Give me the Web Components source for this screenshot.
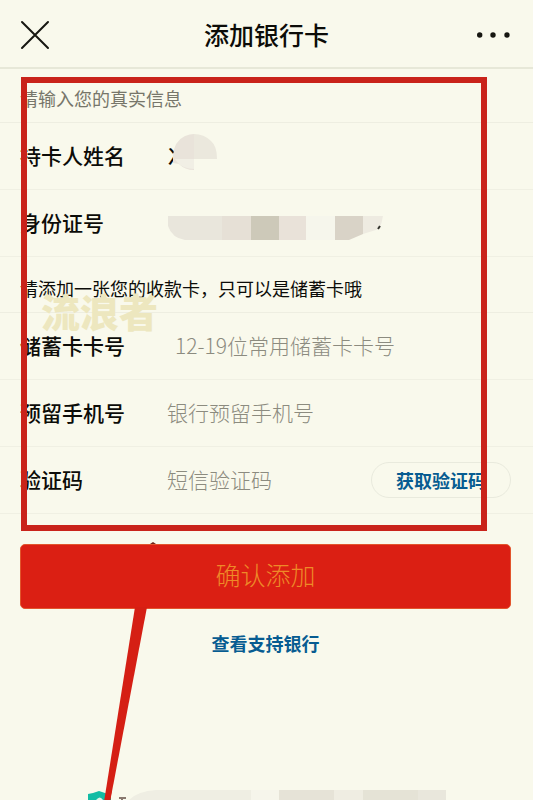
<!DOCTYPE html>
<html lang="zh-CN">
<head>
<meta charset="utf-8">
<meta name="viewport" content="width=device-width, initial-scale=1">
<title>添加银行卡</title>
<style>
    body {
        margin: 0;
        background: #f9f9ec;
        color: #0c0c08;
        font-family: "Noto Sans CJK SC", "Noto Sans", sans-serif;
    }
</style>
</head>
<body>
<bank-card-page></bank-card-page>

<script>
class PageHeader extends HTMLElement {
    constructor() {
        super();
        this.attachShadow({ mode: 'open' });
    }

    connectedCallback() {
        this.shadowRoot.innerHTML = `
            <style>
                :host {
                    display: block;
                    border-bottom: 2px solid #e7e8d8;
                }

                header {
                    height: 67px;
                    padding: 0 20px;
                    box-sizing: border-box;
                    display: flex;
                    justify-content: space-between;
                    align-items: center;
                }

                h1 {
                    margin: 0;
                    font-size: 25px;
                    line-height: 36px;
                    font-weight: 500;
                }

                button {
                    width: 36px;
                    height: 32px;
                    padding: 0;
                    border: none;
                    background: none;
                    color: inherit;
                    display: flex;
                    align-items: center;
                }

                svg {
                    display: block;
                }
            </style>

            <header>
                <button aria-label="关闭">
                    <svg width="31" height="32" viewBox="0 0 31 32" fill="none" stroke="#171711" stroke-width="2" stroke-linecap="round"><path d="M2 4 28 30M28 4 2 30"/></svg>
                </button>
                <h1><slot></slot></h1>
                <button aria-label="更多">
                    <svg width="36" height="8" viewBox="0 0 36 8" fill="#171711"><circle cx="2.7" cy="5" r="2.7"/><circle cx="16" cy="5" r="2.7"/><circle cx="30" cy="5" r="2.7"/></svg>
                </button>
            </header>
        `;
    }
}

class SectionNote extends HTMLElement {
    constructor() {
        super();
        this.attachShadow({ mode: 'open' });
    }

    connectedCallback() {
        this.shadowRoot.innerHTML = `
            <style>
                :host {
                    display: block;
                    padding: 18px 20px 11px;
                    border-bottom: 1px solid #eeeee1;
                    font-size: 18px;
                    line-height: 26px;
                }

                :host([muted]) {
                    padding: 16px 20px 11px;
                    color: #77766a;
                }

                p {
                    margin: 0;
                }
            </style>

            <p><slot></slot></p>
        `;
    }
}

class FormRow extends HTMLElement {
    constructor() {
        super();
        this.attachShadow({ mode: 'open' });
    }

    connectedCallback() {
        this.shadowRoot.innerHTML = `
            <style>
                :host {
                    display: block;
                    position: relative;
                    border-bottom: 1px solid #f0f0e3;
                }

                .row {
                    height: 66px;
                    padding: 0 22px 2px 20px;
                    box-sizing: border-box;
                    display: flex;
                    align-items: center;
                }

                label {
                    width: 147px;
                    flex: none;
                    font-size: 21px;
                    line-height: 30px;
                    font-weight: 500;
                }

                input {
                    flex: 1;
                    min-width: 0;
                    height: 32px;
                    padding: 0;
                    border: none;
                    outline: none;
                    background: none;
                    font: inherit;
                    font-size: 21px;
                    font-weight: 300;
                    color: inherit;
                }

                :host([indent]) input {
                    padding-left: 8px;
                }

                :host([masked]) input {
                    font-weight: 500;
                }

                input::placeholder {
                    color: #8c8b7f;
                    opacity: 1;
                }
            </style>

            <div class="row">
                <label for="field"></label>
                <input id="field">
                <slot></slot>
            </div>
            <slot name="mask"></slot>
        `;

        const input = this.shadowRoot.querySelector("input");
        this.shadowRoot.querySelector("label").textContent = this.getAttribute("label");
        input.placeholder = this.getAttribute("placeholder") || "";
        input.value = this.getAttribute("value") || "";
        input.readOnly = this.hasAttribute("masked");
    }
}

class CodeButton extends HTMLElement {
    constructor() {
        super();
        this.attachShadow({ mode: 'open' });
    }

    connectedCallback() {
        this.shadowRoot.innerHTML = `
            <style>
                :host {
                    display: block;
                    flex: none;
                    padding-top: 2px;
                }

                button {
                    display: block;
                    width: 140px;
                    height: 36px;
                    padding: 0;
                    border: 1px solid #e9eadd;
                    border-radius: 18px;
                    background: none;
                    font: inherit;
                    font-size: 18px;
                    line-height: 26px;
                    font-weight: 700;
                    color: #075c91;
                }
            </style>

            <button type="button"><slot></slot></button>
        `;
    }
}

class SubmitArea extends HTMLElement {
    constructor() {
        super();
        this.attachShadow({ mode: 'open' });
    }

    connectedCallback() {
        this.shadowRoot.innerHTML = `
            <style>
                :host {
                    display: flex;
                    flex-direction: column;
                    align-items: center;
                    gap: 20px;
                    position: relative;
                    padding: 30px 22px 0 20px;
                }

                button {
                    width: 100%;
                    height: 65px;
                    padding: 0 0 5px;
                    border: 1px solid #e2552c;
                    border-radius: 5px;
                    background: #db1f13;
                    font: inherit;
                    font-size: 25px;
                    line-height: 36px;
                    font-weight: 300;
                    color: #ee8a28;
                }

                a {
                    font-size: 18px;
                    line-height: 28px;
                    font-weight: 700;
                    color: #075c91;
                    text-decoration: none;
                }

                .pointer {
                    position: absolute;
                    left: 100px;
                    top: 26px;
                    pointer-events: none;
                }
            </style>

            <button type="submit">确认添加</button>
            <a href="#banks">查看支持银行</a>
            <svg class="pointer" width="60" height="262" viewBox="0 0 60 262">
                <path d="M50 4 53 2 56 4Z" fill="#6d2418"/>
                <path d="M35 67H47L10 262H4Z" fill="#d51f14"/>
            </svg>
        `;
    }
}

class PageFooter extends HTMLElement {
    constructor() {
        super();
        this.attachShadow({ mode: 'open' });
    }

    connectedCallback() {
        this.shadowRoot.innerHTML = `
            <style>
                :host {
                    display: flex;
                    height: 10px;
                    padding-left: 88px;
                    overflow: hidden;
                }

                svg {
                    display: block;
                    flex: none;
                }
            </style>

            <svg width="360" height="10" viewBox="0 0 360 10">
                <path d="M0 10V4L5 3 11 1 17 3 23 5V10Z" fill="#13bca4"/>
                <path d="M8 10Q12 5 15 10Z" fill="#e0f2e4"/>
                <path d="M17 10 19 0H24L22 10Z" fill="#bd251b"/>
                <path d="M31 8H38M34 8V10" stroke="#89796f" stroke-width="2"/>
                <path d="M41 10Q50 1 68 0H163V10Z" fill="#efeee3"/>
                <path d="M163 0H191V10H163Z" fill="#f6f5eb"/>
                <path d="M191 0H246V10H191Z" fill="#e6e3d7"/>
                <path d="M246 0H275V10H246Z" fill="#efede2"/>
                <path d="M275 0H330V10H275Z" fill="#e5e3d6"/>
                <path d="M330 0H358V10H330Z" fill="#e9e7dc"/>
            </svg>
        `;
    }
}

class BankCardPage extends HTMLElement {
    constructor() {
        super();
        this.attachShadow({ mode: 'open' });
    }

    connectedCallback() {
        this.shadowRoot.innerHTML = `
            <style>
                :host {
                    display: flex;
                    flex-direction: column;
                    min-height: 100vh;
                    overflow: hidden;
                }

                .fields {
                    position: relative;
                }

                /* red outline laid over the whole form */
                .frame {
                    position: absolute;
                    top: 8px;
                    right: 46px;
                    bottom: -17px;
                    left: 21px;
                    border: 6px solid #c9231a;
                    pointer-events: none;
                }

                .watermark {
                    position: absolute;
                    left: 41px;
                    top: 222px;
                    font-size: 39px;
                    line-height: 39px;
                    font-weight: 900;
                    color: #ede7bf;
                    pointer-events: none;
                }

                .mask {
                    position: absolute;
                    left: 167px;
                    top: 10px;
                }

                page-footer {
                    margin-top: auto;
                }
            </style>

            <page-header>添加银行卡</page-header>
            <form>
                <div class="fields">
                    <section-note muted>请输入您的真实信息</section-note>
                    <form-row label="持卡人姓名" value="冫" masked>
                        <svg slot="mask" class="mask" width="56" height="40" viewBox="0 0 56 40">
                            <path d="M6 23Q7 8 18 3 23 1 27 1V37Q18 37 12 31L6 30Z" fill="#e9e3da"/>
                            <path d="M27 1Q37 1 44 8 50 13 50 26H27Z" fill="#ebe8dd"/>
                            <path d="M8 26H27V36Q16 36 10 29Z" fill="#f1efe5"/>
                        </svg>
                    </form-row>
                    <form-row label="身份证号" masked>
                        <svg slot="mask" class="mask" width="220" height="50" viewBox="0 0 220 50">
                            <path d="M1 16H55V40H18Q5 38 1 26Z" fill="#e9e6dc"/>
                            <path d="M55 16H84V40H55Z" fill="#e6e0d6"/>
                            <path d="M84 16H112V40H84Z" fill="#cdc9b9"/>
                            <path d="M112 16H139V40H112Z" fill="#e9e2d9"/>
                            <path d="M139 16H168V40H139Z" fill="#f6f6ec"/>
                            <path d="M168 16H196V34L182 40H168Z" fill="#d9d3c7"/>
                            <path d="M196 16H216Q215 23 212 29L196 34Z" fill="#eeebe1"/>
                            <path d="M211 29 213 26" stroke="#33332c" stroke-width="2"/>
                        </svg>
                    </form-row>
                    <section-note>请添加一张您的收款卡，只可以是储蓄卡哦</section-note>
                    <form-row label="储蓄卡卡号" placeholder="12-19位常用储蓄卡卡号" indent></form-row>
                    <form-row label="预留手机号" placeholder="银行预留手机号"></form-row>
                    <form-row label="验证码" placeholder="短信验证码">
                        <code-button>获取验证码</code-button>
                    </form-row>
                    <div class="watermark">流浪者</div>
                    <div class="frame"></div>
                </div>
                <submit-area></submit-area>
            </form>
            <page-footer></page-footer>
        `;
    }
}

customElements.define('page-header', PageHeader);
customElements.define('section-note', SectionNote);
customElements.define('form-row', FormRow);
customElements.define('code-button', CodeButton);
customElements.define('submit-area', SubmitArea);
customElements.define('page-footer', PageFooter);
customElements.define('bank-card-page', BankCardPage);
</script>
</body>
</html>
